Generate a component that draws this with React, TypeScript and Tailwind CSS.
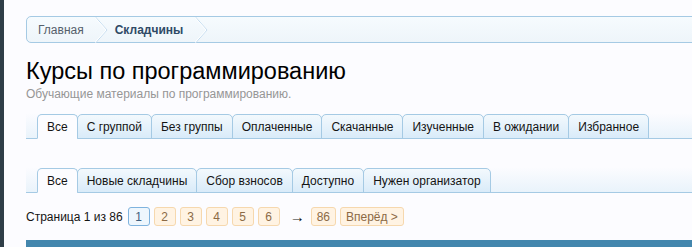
import React from 'react';

const font = { fontFamily: '"Liberation Sans", Arial, sans-serif' };

const mainTabs = ['Все', 'С группой', 'Без группы', 'Оплаченные', 'Скачанные', 'Изученные', 'В ожидании', 'Избранное'];
const subTabs = ['Все', 'Новые складчины', 'Сбор взносов', 'Доступно', 'Нужен организатор'];
const pages = ['1', '2', '3', '4', '5', '6'];

const CrumbArrow: React.FC = () => (
  <svg width="13" height="26" viewBox="0 0 13 26" className="shrink-0">
    <polyline points="0.5,0 12,13 0.5,26" fill="none" stroke="#c4dcef" strokeWidth="1" />
    <polyline points="-0.5,0 11,13 -0.5,26" fill="none" stroke="#ffffff" strokeWidth="1" />
  </svg>
);

const TabBar: React.FC<{ tabs: string[] }> = ({ tabs }) => (
  <div className="flex items-end h-[26px] pl-[11px] border-b border-[#a5cae4] bg-gradient-to-b from-[#fcfcff] to-[#e9f3fb] -mr-[10px]">
    {tabs.map((t, i) => (
      <div
        key={t}
        className={`h-[25px] -mb-px flex items-center px-[9px] text-[12px] text-[#141414] border border-[#a5cae4] rounded-t-[5px] ${i > 0 ? '-ml-px' : ''} ${
          i === 0 ? 'bg-[#fcfcff] border-b-[#fcfcff]' : 'bg-gradient-to-b from-[#f3f9fd] to-[#d9ebf9]'
        }`}
      >
        {t}
      </div>
    ))}
  </div>
);

const PageBtn: React.FC<{ label: string; current?: boolean }> = ({ label, current }) => (
  <span
    className={`h-[19px] min-w-[22px] px-[5px] flex items-center justify-center rounded-[3px] border text-[12px] ${
      current ? 'border-[#7fb3de] bg-[#eef6fd] text-[#3f5f7f]' : 'border-[#f6d8ae] bg-[#fff3e3] text-[#8c6a45]'
    }`}
  >
    {label}
  </span>
);

export default function App() {
  return (
    <div className="flex min-h-screen bg-[#fcfcff] overflow-hidden" style={font}>
      <div className="w-[4px] bg-[#2f3e48] shrink-0" />
      <div className="flex-1 min-w-0 pl-[22px] pt-[16px]">
        <div className="flex items-center h-[27px] border border-[#a5cae4] rounded-[5px] bg-gradient-to-b from-[#f6fbfe] to-[#eef5fa] -mr-[10px] text-[12px]">
          <span className="pl-[11px] pr-[11px] text-[#55606b]">Главная</span>
          <CrumbArrow />
          <span className="pl-[7px] pr-[12px] font-bold text-[#2f4a66]">Складчины</span>
          <CrumbArrow />
        </div>

        <h1 className="mt-[13px] text-[23.5px] leading-[30px] text-[#000]">Курсы по программированию</h1>
        <p className="text-[12px] leading-[16px] text-[#969696]">Обучающие материалы по программированию.</p>

        <div className="mt-[11px]">
          <TabBar tabs={mainTabs} />
        </div>
        <div className="mt-[28px]">
          <TabBar tabs={subTabs} />
        </div>

        <div className="mt-[14px] flex items-center text-[12px] text-[#141414]">
          <span className="mr-[5px]">Страница 1 из 86</span>
          <div className="flex items-center gap-[4px]">
            {pages.map((p, i) => (
              <PageBtn key={p} label={p} current={i === 0} />
            ))}
          </div>
          <span className="ml-[10px] mr-[6px] text-[15px] leading-[19px]">→</span>
          <div className="flex items-center gap-[4px]">
            <PageBtn label="86" />
            <PageBtn label="Вперёд >" />
          </div>
        </div>

        <div className="mt-[14px] h-[20px] bg-[#4386ad] -mr-[10px]" />
      </div>
    </div>
  );
}
